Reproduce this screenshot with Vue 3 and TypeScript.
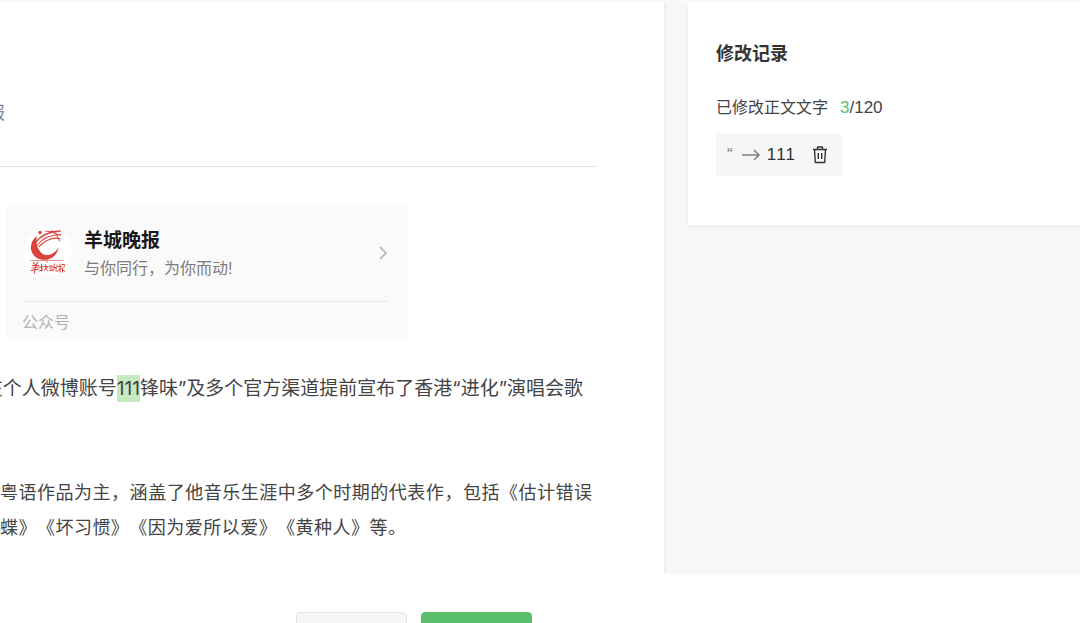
<script setup lang="ts">
import { ref } from 'vue'

interface Change {
  from: string
  to: string
}

const limit = 120
const changes = ref<Change[]>([{ from: '“', to: '111' }])
const used = ref(3)

function removeChange(index: number) {
  used.value -= changes.value[index].to.length
  changes.value.splice(index, 1)
}
</script>

<template>
  <div class="page">
    <div class="workspace">
      <main class="article">
        <header class="byline"><span class="source">报</span></header>

        <a class="account" href="#account">
          <span class="account-main">
            <svg class="logo" viewBox="0 0 48 48" aria-hidden="true">
              <rect width="48" height="48" rx="24" fill="#fff" />
              <path d="M13 9C5 15 5 25 12 30.500c9 5.500 21 1 22.500-10C30 28 22 30.500 17 25.500 12.500 21 11.500 15 13 9z" fill="#d9413a" />
              <circle cx="16" cy="5.500" r="1.700" fill="#d9413a" />
              <g fill="none" stroke="#d9413a" stroke-linecap="round">
                <path d="M11 16C17 8 25 4.500 36 4" stroke-width="1.700" />
                <path d="M13 18C20 10 27 7.500 37 7.500" stroke-width="1.100" />
                <path d="M15 19.500C22 12.500 28 10 36 11.500" stroke-width="1.100" />
                <path d="M22 4.500c5-1 8 2.500 14.500 3.500M27 4c5 0 6 5 8.500 10" stroke-width="1" />
                <path d="M7 33.500h32M23 32.500v3" stroke-width=".6" />
                <path d="M9.500 35.500l1.500 2M14 35l-2 3M8.500 38.500h6M8 41l6.500-1M7 43.500l8-1.500M11.500 38l-1 8" stroke-width="1.100" />
                <path d="M17.500 37v7M15.500 40h3.500M15.500 44l3.500-1.500M20 39.500h4M21.500 37.500c0 4 1 5.500 2.500 6.500M23.500 40l-3.500 4" stroke-width="1" />
                <path d="M26 39v4.500M28 39v4.500M26 39h2M26 43.500h2M30.500 37l-1 3.500h3.500v-2.500M31 40l-2 4M32 41v3h2" stroke-width=".9" />
                <path d="M36 37v8M34.500 39.500h3M34.500 43l2.500-1M38 37.500h2.500l-.5 2.500M38.500 41v4M38 41.500l2.500 3" stroke-width="1" />
              </g>
            </svg>
            <span class="account-text">
              <strong>羊城晚报</strong>
              <span>与你同行，为你而动!</span>
            </span>
            <svg class="chevron" viewBox="0 0 10 14" aria-hidden="true">
              <path d="M2 1l6 6-6 6" fill="none" stroke="#b2b2b2" stroke-width="1.6" />
            </svg>
          </span>
          <span class="account-kind">公众号</span>
        </a>

        <p class="lead"><span>在个人微博账号<mark>111</mark>锋味”及多个官方渠道提前宣布了香港“进化”演唱会歌</span></p>
        <p class="songs">
          <span class="row">粤语作品为主，涵盖了他音乐生涯中多个时期的代表作，包括《估计错误</span>
          <span class="row closing">蝶》《坏习惯》《因为爱所以爱》《黄种人》等。</span>
        </p>
      </main>

      <aside class="side">
        <section class="record">
          <h2>修改记录</h2>
          <p class="count">已修改正文文字<span class="numbers"><em>{{ used }}</em>/{{ limit }}</span></p>
          <ul>
            <li v-for="(change, i) in changes" :key="i">
              <span class="from">{{ change.from }}</span>
              <svg class="arrow" viewBox="0 0 18 12" aria-hidden="true">
                <path d="M0 6h17M12 1l5 5-5 5" fill="none" stroke="#7d7d7d" stroke-width="1.5" />
              </svg>
              <span class="to">{{ change.to }}</span>
              <button type="button" class="remove" aria-label="删除" @click="removeChange(i)">
                <svg viewBox="0 0 16 18" aria-hidden="true">
                  <path d="M1 3.500h14M5.500 3V1h5v2M2.500 3.500l.8 13h9.400l.8-13M6.300 7v6M9.700 7v6" fill="none" stroke="#333" stroke-width="1.4" stroke-linejoin="round" />
                </svg>
              </button>
            </li>
          </ul>
        </section>
      </aside>
    </div>

    <footer class="actions">
      <button type="button" class="action" aria-label="取消"></button>
      <button type="button" class="action primary" aria-label="提交"></button>
    </footer>
  </div>
</template>

<style>
body {
  overflow: hidden;
}
</style>

<style scoped>
.page {
  height: 100vh;
  overflow: hidden;
  display: flex;
  flex-direction: column;
  background: #fff;
  color: #444;
  font-family: "Liberation Sans", "Noto Sans CJK SC", sans-serif;
  text-spacing-trim: space-all;
}

.workspace {
  flex: 1;
  min-height: 0;
  overflow: hidden;
  display: flex;
  gap: 24px;
  background: #f5f7f9;
  border-top: 2px solid #f8f9fa;
  box-sizing: border-box;
}

.article {
  flex: 1;
  min-width: 0;
  overflow: hidden;
  background: #fff;
  box-shadow: 1px 0 4px rgba(0, 0, 0, 0.06);
}

.byline {
  height: 165px;
  margin-right: 67px;
  padding-top: 99px;
  box-sizing: border-box;
  border-bottom: 1px solid #e4e4e4;
}

.source {
  width: 5px;
  display: flex;
  justify-content: flex-end;
  font-size: 17px;
  line-height: 26px;
  color: #7b7f93;
}

.account {
  display: block;
  width: 403px;
  margin: 38px 0 0 5px;
  padding: 20px 20px 6px 17px;
  box-sizing: border-box;
  border-radius: 6px;
  background: #fafafa;
  text-decoration: none;
}

.account-main {
  display: flex;
  align-items: center;
  padding-bottom: 20px;
  border-bottom: 1px solid #e8e8e8;
}

.logo {
  width: 48px;
  height: 48px;
  margin: 2px 12px 6px 2px;
}

.account-text {
  flex: 1;
  display: flex;
  flex-direction: column;
  padding-top: 2px;
  margin-bottom: -2px;
  font-size: 16px;
  line-height: 28px;
  color: #7c7c7c;
}

.account-text strong {
  font-size: 19px;
  font-weight: 700;
  color: #191919;
}

.chevron {
  width: 10px;
  height: 14px;
}

.account-kind {
  display: block;
  font-size: 16px;
  line-height: 24px;
  padding-top: 9px;
  color: #b2b2b2;
}

.lead {
  display: flex;
  justify-content: flex-end;
  margin: 31px 81px 0 0;
  font-family: Inter, "Noto Sans CJK SC", sans-serif;
  font-size: 19px;
  line-height: 34px;
  white-space: nowrap;
}

.lead mark {
  padding: 2px 0;
  background: #c6e9bf;
  color: inherit;
}

.songs {
  margin: 70px 72px 0 0;
  font-size: 18px;
  line-height: 35px;
}

.row {
  display: block;
  text-align: justify;
  text-align-last: justify;
}

.closing {
  width: 406px;
}

.side {
  width: 392px;
}

.record {
  height: 223px;
  padding: 37px 28px;
  box-sizing: border-box;
  background: #fff;
  box-shadow: 0 1px 4px rgba(0, 0, 0, 0.05);
}

.record h2 {
  margin: 0;
  font-size: 18px;
  line-height: 30px;
  color: #333;
}

.count {
  margin: 25px 0 12px;
  font-size: 16px;
  line-height: 28px;
}

.numbers {
  margin-left: 12px;
  font-size: 17px;
}

.numbers em {
  font-style: normal;
  color: #5ac26b;
}

.record ul {
  margin: 0;
  padding: 0;
  list-style: none;
}

.record li {
  display: inline-flex;
  align-items: center;
  height: 42px;
  padding: 0 14px 0 11px;
  box-sizing: border-box;
  background: #f5f6f8;
  font-size: 17px;
  font-kerning: none;
}

.from {
  color: #777;
}

.arrow {
  width: 18px;
  height: 12px;
  margin: 0 7px 0 9px;
}

.to {
  color: #333;
}

.remove {
  display: flex;
  margin: 0 0 0 17px;
  padding: 0;
  border: 0;
  background: none;
  cursor: pointer;
}

.remove svg {
  width: 16px;
  height: 18px;
}

.actions {
  height: 49px;
  padding: 38px 0 0 296px;
  box-sizing: border-box;
  display: flex;
  gap: 14px;
}

.action {
  flex: none;
  width: 111px;
  height: 40px;
  border: 1px solid #e5e5e7;
  border-radius: 4px;
  background: #f6f6f8;
}

.action.primary {
  border-color: #5abf6c;
  background: #5abf6c;
}
</style>
